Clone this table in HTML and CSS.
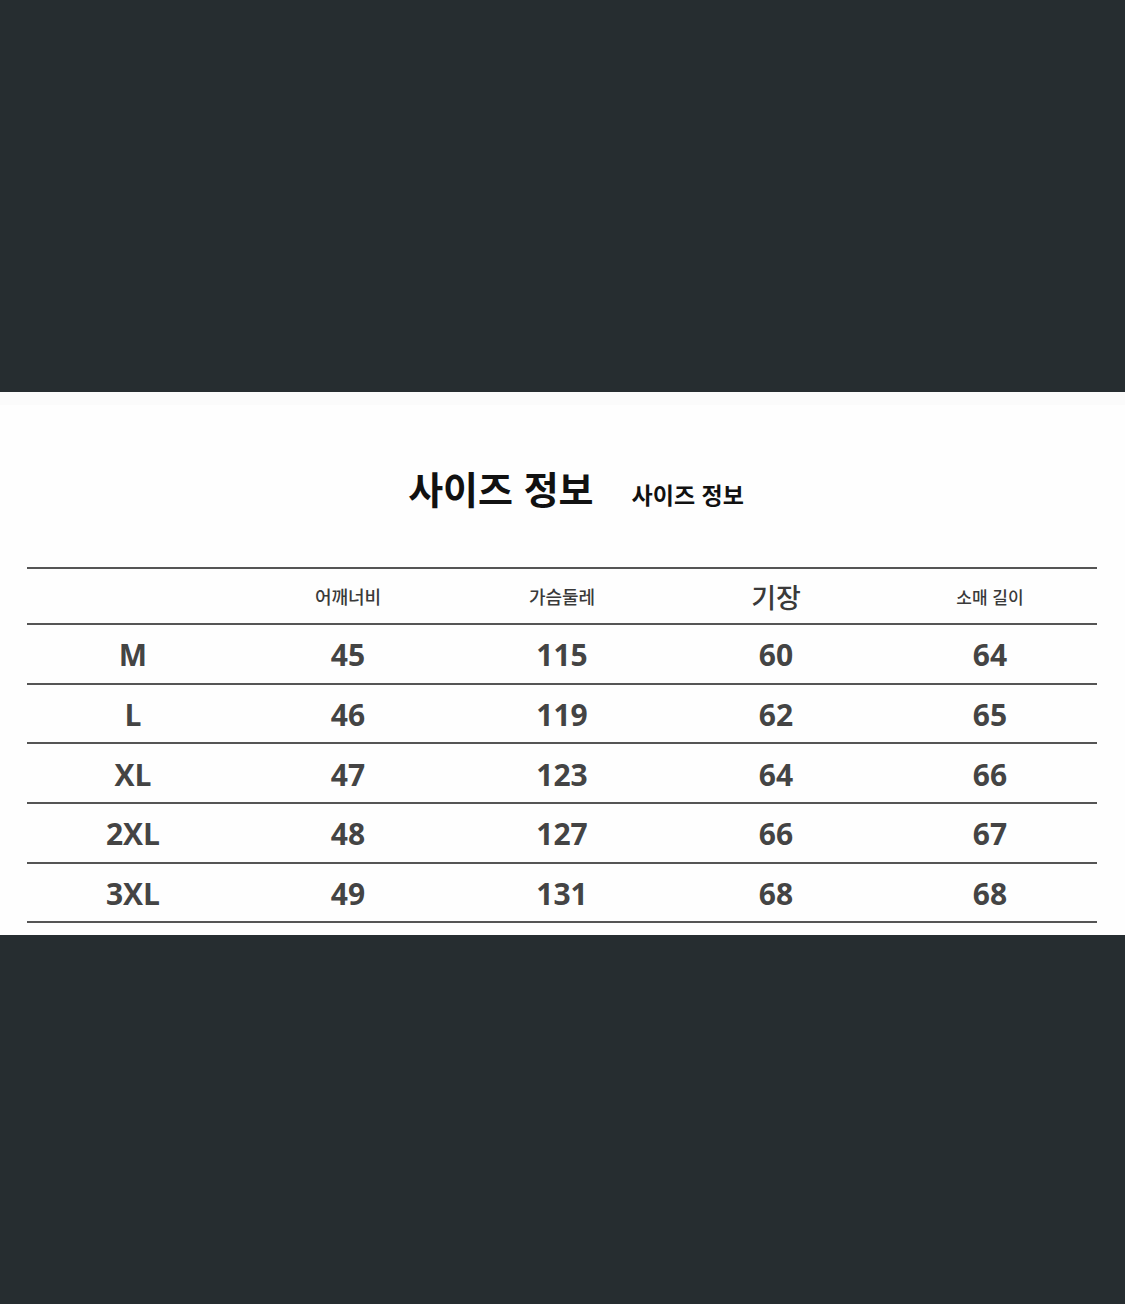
FILE: index.html
```html
<!DOCTYPE html>
<html lang="ko">
<head>
<meta charset="utf-8">
<link rel="stylesheet" href="styles.css">
</head>
<body>
<div class="top"></div>
<section class="panel">
  <div class="title">
    <span class="t-big">사이즈 정보</span>
    <span class="t-small">사이즈 정보</span>
  </div>
  <div class="table">
    <div class="row head">
      <div class="cell"></div>
      <div class="cell h-s">어깨너비</div>
      <div class="cell h-s">가슴둘레</div>
      <div class="cell h-l">기장</div>
      <div class="cell h-xs">소매 길이</div>
    </div>
    <div class="row"><div class="cell">M</div><div class="cell">45</div><div class="cell">115</div><div class="cell">60</div><div class="cell">64</div></div>
    <div class="row"><div class="cell">L</div><div class="cell">46</div><div class="cell">119</div><div class="cell">62</div><div class="cell">65</div></div>
    <div class="row"><div class="cell">XL</div><div class="cell">47</div><div class="cell">123</div><div class="cell">64</div><div class="cell">66</div></div>
    <div class="row"><div class="cell">2XL</div><div class="cell">48</div><div class="cell">127</div><div class="cell">66</div><div class="cell">67</div></div>
    <div class="row"><div class="cell">3XL</div><div class="cell">49</div><div class="cell">131</div><div class="cell">68</div><div class="cell">68</div></div>
  </div>
</section>
<div class="bottom"></div>
</body>
</html>
```
FILE: styles.css
```css
html, body {
  margin: 0;
  padding: 0;
  background: #262d30;
  width: 1125px;
  height: 1304px;
  overflow: hidden;
  font-family: "Open Sans", "Noto Sans CJK KR", sans-serif;
}
.top { height: 392px; }
.panel {
  background: #fefefe;
  height: 543px;
  box-sizing: border-box;
  padding: 0 28px 0 27px;
  border-top: 13px solid #fbfbfb;
}
.title {
  display: flex;
  justify-content: center;
  align-items: baseline;
  gap: 38px;
  padding-top: 60px;
  height: 162px;
  box-sizing: border-box;
  font-family: "Noto Sans CJK KR", sans-serif;
  color: #111;
  font-weight: 700;
  padding-left: 28px;
}
.t-big { font-size: 38px; line-height: 46px; }
.t-small { font-size: 23px; line-height: 28px; font-weight: 600; }
.table {
  border-top: 2px solid #555;
}
.row {
  display: grid;
  grid-template-columns: repeat(5, 1fr);
  height: 57.7px;
  border-bottom: 2px solid #555;
}
.row.head { height: 54px; }
.cell {
  display: flex;
  align-items: center;
  justify-content: center;
  font-size: 30px;
  font-weight: 700;
  color: #444;
  padding-top: 2px;
  box-sizing: border-box;
}
.cell:first-child { padding-right: 2px; }
.h-s, .h-l, .h-xs {
  font-family: "Noto Sans CJK KR", sans-serif;
  font-weight: 500;
  color: #3a3a3a;
  padding-top: 0;
}
.h-s { font-size: 18px; }
.h-l { font-size: 27px; }
.h-xs { font-size: 17px; }
.bottom { height: 369px; }
```
